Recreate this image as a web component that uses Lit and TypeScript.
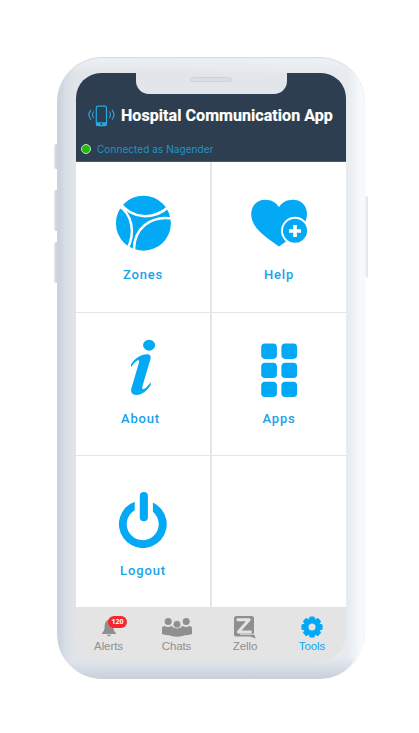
import { LitElement, html, css, svg } from "lit";
import { customElement, property } from "lit/decorators.js";

const zones = html`<svg width="57" height="57" viewBox="115 195 57 57">
  <circle cx="143.4" cy="223.2" r="27.5" fill="#03a9f4" />
  <g fill="none" stroke="#fff" stroke-width="2.500">
    <path d="M119.500 202.500C132 219.500 154 220.500 169.500 206" />
    <path d="M118 205.500C132.500 213.500 135.500 233 127.500 249" />
    <path d="M134 250.500C133.500 229 150 215.500 172 218.500" />
  </g>
</svg>`;

const help = html`<svg width="58" height="50" viewBox="250 198 58 50">
  <path fill="#03a9f4" d="M279 246.500C268 238.500 251.200 229 251.200 214C251.200 205.500 257.500 199.800 265 199.800C271.500 199.800 276 202.500 279 207.300C282 202.500 286.500 199.800 293 199.800C301 199.800 307 205.500 307 214C307 228 290 238.500 279 246.500Z" />
  <circle cx="295" cy="230.800" r="13" fill="#03a9f4" stroke="#fff" stroke-width="1.900" />
  <path d="M289 231H301M295 225V237" stroke="#fff" stroke-width="3.700" />
</svg>`;

const about = html`<svg width="28" height="57" viewBox="129 339 28 57">
  <g fill="#03a9f4">
    <ellipse cx="149.100" cy="345.200" rx="6" ry="5.500" />
    <path d="M131 364.500C134 359 141 354.200 147 354.200C150.300 354.200 151.300 356.300 150.300 359.500L142.500 386C141.700 389 142.500 390 144.500 388.800C147 387.300 148.800 384.500 150.700 382.200V385C147.500 390.500 142 395 136.500 395C132 395 130.300 392 131.500 388L139 362.500C139.600 360.300 138.700 359.700 137 360.700C134.700 362 133 364.500 131 367.200Z" />
  </g>
</svg>`;

const apps = html`<svg width="38" height="56" viewBox="260 342 38 56">
  ${[343.6, 362.8, 381.8].map((y) =>
    [261.2, 281.4].map(
      (x) => svg`<rect x=${x} y=${y} width="15.700" height="15.300" rx="3.800" fill="#03a9f4" />`
    )
  )}
</svg>`;

const logout = html`<svg width="50" height="57" viewBox="118 491 50 57">
  <g fill="#03a9f4">
    <path d="M134.700 501.700A23.900 23.900 0 1 0 152.900 502.500V511.800A16 16 0 1 1 134.700 510.300Z" />
    <rect x="139.800" y="492" width="8.100" height="29.200" rx="4" />
  </g>
</svg>`;

const bell = html`<svg width="16" height="24" viewBox="100.700 615 16 24">
  <path fill="#8f8f8f" d="M108.700 619.500C105.500 620.500 104.300 623 104.300 626.500C104.300 630 103.500 631.500 101.800 633V634H115.600V633C113.900 631.500 113.100 630 113.100 626.500C113.100 623 112 620.500 108.700 619.500Z" />
  <path fill="#8f8f8f" d="M106.500 634.800H111Q108.700 637.800 106.500 634.800Z" />
</svg>`;

const chats = html`<svg width="32" height="24" viewBox="161 615 32 24">
  <g fill="#8f8f8f">
    <circle cx="168.200" cy="621.400" r="3.500" />
    <circle cx="186.200" cy="621.400" r="3.500" />
    <path d="M162 634V628.500Q162 626 164.500 626Q168 628 171.500 626L174 628H180L182.500 626Q186 628 189.500 626Q192 626 192 628.500V634Q188 636 182 634.500H172Q166 636 162 634Z" />
    <path d="M168.200 635Q168 629 172 628.500Q177 631 182 628.500Q185.800 629 185.800 635Q177 638.600 168.200 635Z" />
    <circle cx="177" cy="624.300" r="3.900" stroke="#e4e4e4" stroke-width=".8" />
  </g>
</svg>`;

const zello = html`<svg width="24" height="24" viewBox="234 615 24 24">
  <path fill="#8f8f8f" d="M237.500 616H252.500Q255 616 255 618.500V633.500L256.600 638.500L251 636.600H237.500Q235 636.600 235 634V618.500Q235 616 237.500 616Z" />
  <path fill="none" stroke="#e4e4e4" stroke-width="2.900" stroke-linejoin="round" stroke-linecap="round" d="M238.800 619.700H250.200L239.300 632H251.500" />
  <path fill="none" stroke="#e4e4e4" stroke-width="1" d="M241 634.200H256" />
</svg>`;

const gear = html`<svg width="24" height="24" viewBox="-12 -12 24 24">
  <g fill="#03a9f4">
    <circle r="8.600" />
    ${[0, 45, 90, 135, 180, 225, 270, 315].map(
      (a) => svg`<rect x="-2.900" y="-10.600" width="5.800" height="6" rx="1.500" transform="rotate(${a})" />`
    )}
  </g>
  <circle r="3.500" fill="#e4e4e4" />
</svg>`;

const phoneLogo = html`<svg width="28" height="22" viewBox="87 105 28 22">
  <g fill="none" stroke="#27a9e1">
    <rect x="96.300" y="106.200" width="10.200" height="19.500" rx="1.800" stroke-width="1.200" />
    <path stroke-width="1.100" d="M93.700 111.500Q91.200 114.500 93.700 118M91 109.800Q86.700 114.500 91 119.600M109.200 111.500Q111.700 114.500 109.200 118M111.900 109.800Q116.200 114.500 111.900 119.600" />
  </g>
  <path fill="#27a9e1" d="M96 122.300H106.800V124.500Q106.800 126 105 126H98Q96 126 96 124.500Z" />
  <circle cx="101.400" cy="124" r=".9" fill="#2d3e50" />
</svg>`;

@customElement("tool-tile")
class ToolTile extends LitElement {
  @property() label = "";
  static styles = css`
    :host {
      display: flex;
      flex-direction: column;
      align-items: center;
      justify-content: flex-end;
      background: #fff;
      box-sizing: border-box;
    }
    .icon { display: flex; }
    .label {
      font: 500 13px/16px Roboto, sans-serif;
      letter-spacing: 0.85px;
      color: #1ba1e8;
      margin-top: var(--label-gap, 15px);
      padding-right: var(--label-inset, 0);
    }
  `;
  render() {
    return html`<div class="icon"><slot></slot></div><div class="label">${this.label}</div>`;
  }
}

@customElement("nav-tab")
class NavTab extends LitElement {
  @property() label = "";
  @property({ type: Boolean, reflect: true }) active = false;
  static styles = css`
    :host {
      display: flex;
      flex-direction: column;
      align-items: center;
      position: relative;
      padding-top: 8px;
      color: #8f8f8f;
      font: 11.5px/14px "Liberation Sans", Arial, sans-serif;
      letter-spacing: -0.1px;
    }
    :host([active]) { color: #03a9f4; }
    .icon { display: flex; height: 24px; }
  `;
  render() {
    return html`<div class="icon"><slot></slot></div><div>${this.label}</div>`;
  }
}

@customElement("app-root")
class AppRoot extends LitElement {
  static styles = css`
    :host {
      display: block;
      box-sizing: border-box;
      height: 733px;
      background: #fff;
      padding: 57px 54px 0 57px;
      overflow: hidden;
    }
    .phone {
      position: relative;
      box-sizing: border-box;
      width: 308px;
      height: 622px;
      padding: 16px 19px 18px;
      border-radius: 45px;
      background: linear-gradient(to bottom, transparent 96.500%, #dde3ea 97.500%, #c8cfd9),
        linear-gradient(to bottom, #eef1f4, #e2e6ea00 16px),
        linear-gradient(to right, #cdd3dc 0, #ccd3dd 3px, #d7dde4 8px, #e1e5ea 18px, #e3e7eb 50%, #e7ebef 290px, #f3f6f8 301px, #fafbfc 305px, #e0e3e6 308px);
      box-shadow: inset 0 1px 1px #d5dade, inset -3px 0 0 -1px #f9fafb;
    }
    .key {
      position: absolute;
      box-sizing: border-box;
      width: 3px;
      left: -3px;
      border-radius: 2px 0 0 2px;
      background: linear-gradient(to right, #e5e8ec, #cbd1d9);
    }
    .mute { top: 87px; height: 25px; }
    .up { top: 133px; height: 41px; }
    .down { top: 185px; height: 41px; }
    .power {
      top: 139px;
      height: 82px;
      left: 308px;
      border-radius: 0 2px 2px 0;
      background: linear-gradient(to right, #f4f6f8, #dfe2e5);
    }
    .screen {
      position: relative;
      display: flex;
      flex-direction: column;
      height: 588px;
      width: 270px;
      overflow: hidden;
      border-radius: 25px 25px 27px 27px;
      background: #e4e4e4;
    }
    .notch {
      position: absolute;
      left: 60px;
      top: 0;
      width: 151px;
      height: 21px;
      border-radius: 0 0 13px 13px;
      background: #e2e6eb;
    }
    .speaker {
      box-sizing: border-box;
      width: 42px;
      height: 5px;
      margin: 4px 0 0 54px;
      border: 1px solid #ced3dc;
      border-radius: 3px;
      background: #d9dde4;
    }
    header {
      box-sizing: border-box;
      height: 89px;
      flex: none;
      padding-top: 32px;
      background: #2d3e50;
      border-bottom: 1px solid #4b5968;
    }
    .brand {
      display: flex;
      align-items: center;
      height: 22px;
      padding-left: 11px;
      gap: 6px;
    }
    .title {
      font: 700 16px/22px Roboto, sans-serif;
      letter-spacing: 0.06px;
      -webkit-text-stroke: 0.2px #fff;
      color: #fff;
      white-space: nowrap;
    }
    .status {
      display: flex;
      align-items: center;
      height: 14px;
      margin-top: 15px;
      padding-left: 5px;
      gap: 6px;
      color: #2294c6;
      font: 10px/14px Inter, sans-serif;
      letter-spacing: 0.07px;
    }
    .dot {
      box-sizing: border-box;
      width: 10px;
      height: 10px;
      border: 1.5px solid #c5dfca;
      border-radius: 50%;
      background: #22bd08;
    }
    .grid {
      display: grid;
      grid-template-columns: 134px 134px;
      grid-template-rows: 150px 142px 151px;
      column-gap: 2px;
      row-gap: 1px;
      height: 445px;
      background: #e4e5e6;
    }
    .r1 { padding-bottom: 29px; }
    .r2 { padding-bottom: 28px; }
    .r3 { padding-bottom: 28px; }
    .wide { --label-gap: 19px; }
    .tight { --label-gap: 13px; }
    .inset { --label-inset: 5px; }
    nav {
      display: grid;
      grid-template-columns: 65px 71px 66px 68px;
      flex: 1;
      background: #e4e4e4;
    }
    .badge {
      position: absolute;
      top: 9px;
      left: 32px;
      width: 19px;
      height: 12px;
      border-radius: 6px;
      background: #f8262c;
      color: #fff;
      text-align: center;
      font: 700 7px/12px "Open Sans", sans-serif;
      letter-spacing: 0;
    }
  `;

  render() {
    return html`
      <div class="phone">
        <div class="key mute"></div>
        <div class="key up"></div>
        <div class="key down"></div>
        <div class="key power"></div>
        <div class="screen">
          <header>
            <div class="brand">${phoneLogo}<span class="title">Hospital Communication App</span></div>
            <div class="status"><span class="dot"></span><span>Connected as Nagender</span></div>
          </header>
          <main class="grid">
            <tool-tile class="r1" label="Zones">${zones}</tool-tile>
            <tool-tile class="r1 wide" label="Help">${help}</tool-tile>
            <tool-tile class="r2 inset" label="About">${about}</tool-tile>
            <tool-tile class="r2 tight" label="Apps">${apps}</tool-tile>
            <tool-tile class="r3" label="Logout">${logout}</tool-tile>
            <tool-tile></tool-tile>
          </main>
          <nav>
            <nav-tab label="Alerts">${bell}<span class="badge">120</span></nav-tab>
            <nav-tab label="Chats">${chats}</nav-tab>
            <nav-tab label="Zello">${zello}</nav-tab>
            <nav-tab label="Tools" active>${gear}</nav-tab>
          </nav>
          <div class="notch"><div class="speaker"></div></div>
        </div>
      </div>
    `;
  }
}
